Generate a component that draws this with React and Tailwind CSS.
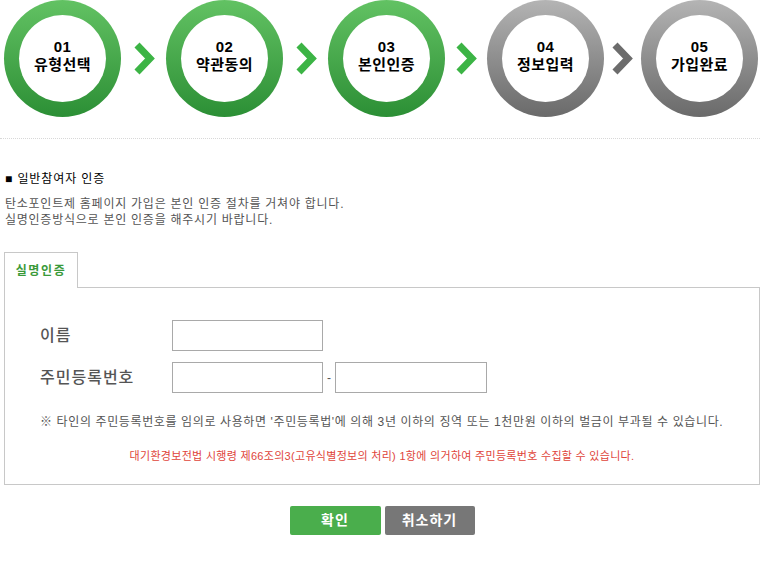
import React from "react";

const steps = [
  { no: "01", label: "유형선택", done: true },
  { no: "02", label: "약관동의", done: true },
  { no: "03", label: "본인인증", done: true },
  { no: "04", label: "정보입력", done: false },
  { no: "05", label: "가입완료", done: false },
];

const Chevron = ({ green }) => (
  <svg width="22" height="35" viewBox="0 0 22 35" className="shrink-0">
    <polyline
      points="4,4 17,17.5 4,31"
      fill="none"
      stroke={green ? "#3cb445" : "#6c6c6c"}
      strokeWidth="7"
      strokeLinejoin="miter"
    />
  </svg>
);

const StepCircle = ({ step }) => (
  <div
    className={
      step.done
        ? "w-[117px] h-[117px] rounded-full bg-linear-to-b from-[#62c263] to-[#2b8f35] p-[15px] shrink-0"
        : "w-[117px] h-[117px] rounded-full bg-linear-to-b from-[#b4b4b4] to-[#6a6a6a] p-[15px] shrink-0"
    }
  >
    <div className="w-full h-full rounded-full bg-white flex flex-col items-center justify-center pb-[5px] text-[15px] font-bold leading-[18px] tracking-[0.5px] text-black">
      <span>{step.no}</span>
      <span>{step.label}</span>
    </div>
  </div>
);

const App = () => {
  return (
    <div className="w-[773px] min-h-[563px] bg-white font-['Liberation_Sans','Noto_Sans_CJK_KR',sans-serif] text-[12px]">
      {/* Steps */}
      <div className="flex items-center pl-[4px]">
        <StepCircle step={steps[0]} />
        <div className="ml-[12px] mr-[11px]"><Chevron green /></div>
        <StepCircle step={steps[1]} />
        <div className="ml-[12px] mr-[11px]"><Chevron green /></div>
        <StepCircle step={steps[2]} />
        <div className="ml-[10px] mr-[10px]"><Chevron green /></div>
        <StepCircle step={steps[3]} />
        <div className="ml-[7px] mr-[8px]"><Chevron /></div>
        <StepCircle step={steps[4]} />
      </div>

      <div className="mt-[21px] w-[760px] border-t border-dotted border-[#d8d8d8]" />

      <div className="ml-[4px] w-[756px]">
        {/* Intro */}
        <p className="mt-[32px] pl-[1px] text-black leading-[16px] tracking-[0.9px]">■ 일반참여자 인증</p>
        <p className="mt-[9px] pl-[1px] text-[#555] leading-[16px] tracking-[0.75px]">
          탄소포인트제 홈페이지 가입은 본인 인증 절차를 거쳐야 합니다.
          <br />
          실명인증방식으로 본인 인증을 해주시기 바랍니다.
        </p>

        {/* Tab */}
        <div className="mt-[24px] flex">
          <div className="w-[74px] h-[36px] border border-b-0 border-[#c8c8c8] bg-white -mb-px relative z-10 flex items-center justify-center text-[12px] font-bold tracking-[1.6px] text-[#3a9a3a]">
            실명인증
          </div>
        </div>

        {/* Panel */}
        <div className="border border-[#c8c8c8] h-[198px] pt-[32px] pl-[35px]">
          <div className="flex items-center">
            <span className="w-[132px] text-[16px] font-medium text-[#555] tracking-[1px]">이름</span>
            <input className="w-[151px] h-[31px] border border-[#a9a9a9] outline-none" />
          </div>
          <div className="flex items-center mt-[11px]">
            <span className="w-[132px] text-[16px] font-medium text-[#555] tracking-[1px]">주민등록번호</span>
            <input className="w-[151px] h-[31px] border border-[#a9a9a9] outline-none" />
            <span className="w-[12px] text-center text-[#555]">-</span>
            <input className="w-[152px] h-[31px] border border-[#a9a9a9] outline-none" />
          </div>
          <p className="mt-[21px] text-[12px] text-[#555] leading-[16px] tracking-[0.62px]">
            ※ 타인의 주민등록번호를 임의로 사용하면 '주민등록법'에 의해 3년 이하의 징역 또는 1천만원 이하의 벌금이 부과될 수 있습니다.
          </p>
          <p className="mt-[19px] -ml-[35px] text-center text-[11px] tracking-[0.3px] text-[#e0443a] leading-[14px]">
            대기환경보전법 시행령 제66조의3(고유식별정보의 처리) 1항에 의거하여 주민등록번호 수집할 수 있습니다.
          </p>
        </div>

        {/* Buttons */}
        <div className="mt-[21px] flex justify-center gap-[4px]">
          <button className="w-[91px] h-[29px] rounded-[2px] bg-[#4aae4c] text-white text-[14px] font-bold tracking-[1px]">
            확인
          </button>
          <button className="w-[90px] h-[29px] rounded-[2px] bg-[#777777] text-white text-[14px] font-bold tracking-[1px]">
            취소하기
          </button>
        </div>
      </div>
    </div>
  );
};

export default App;
